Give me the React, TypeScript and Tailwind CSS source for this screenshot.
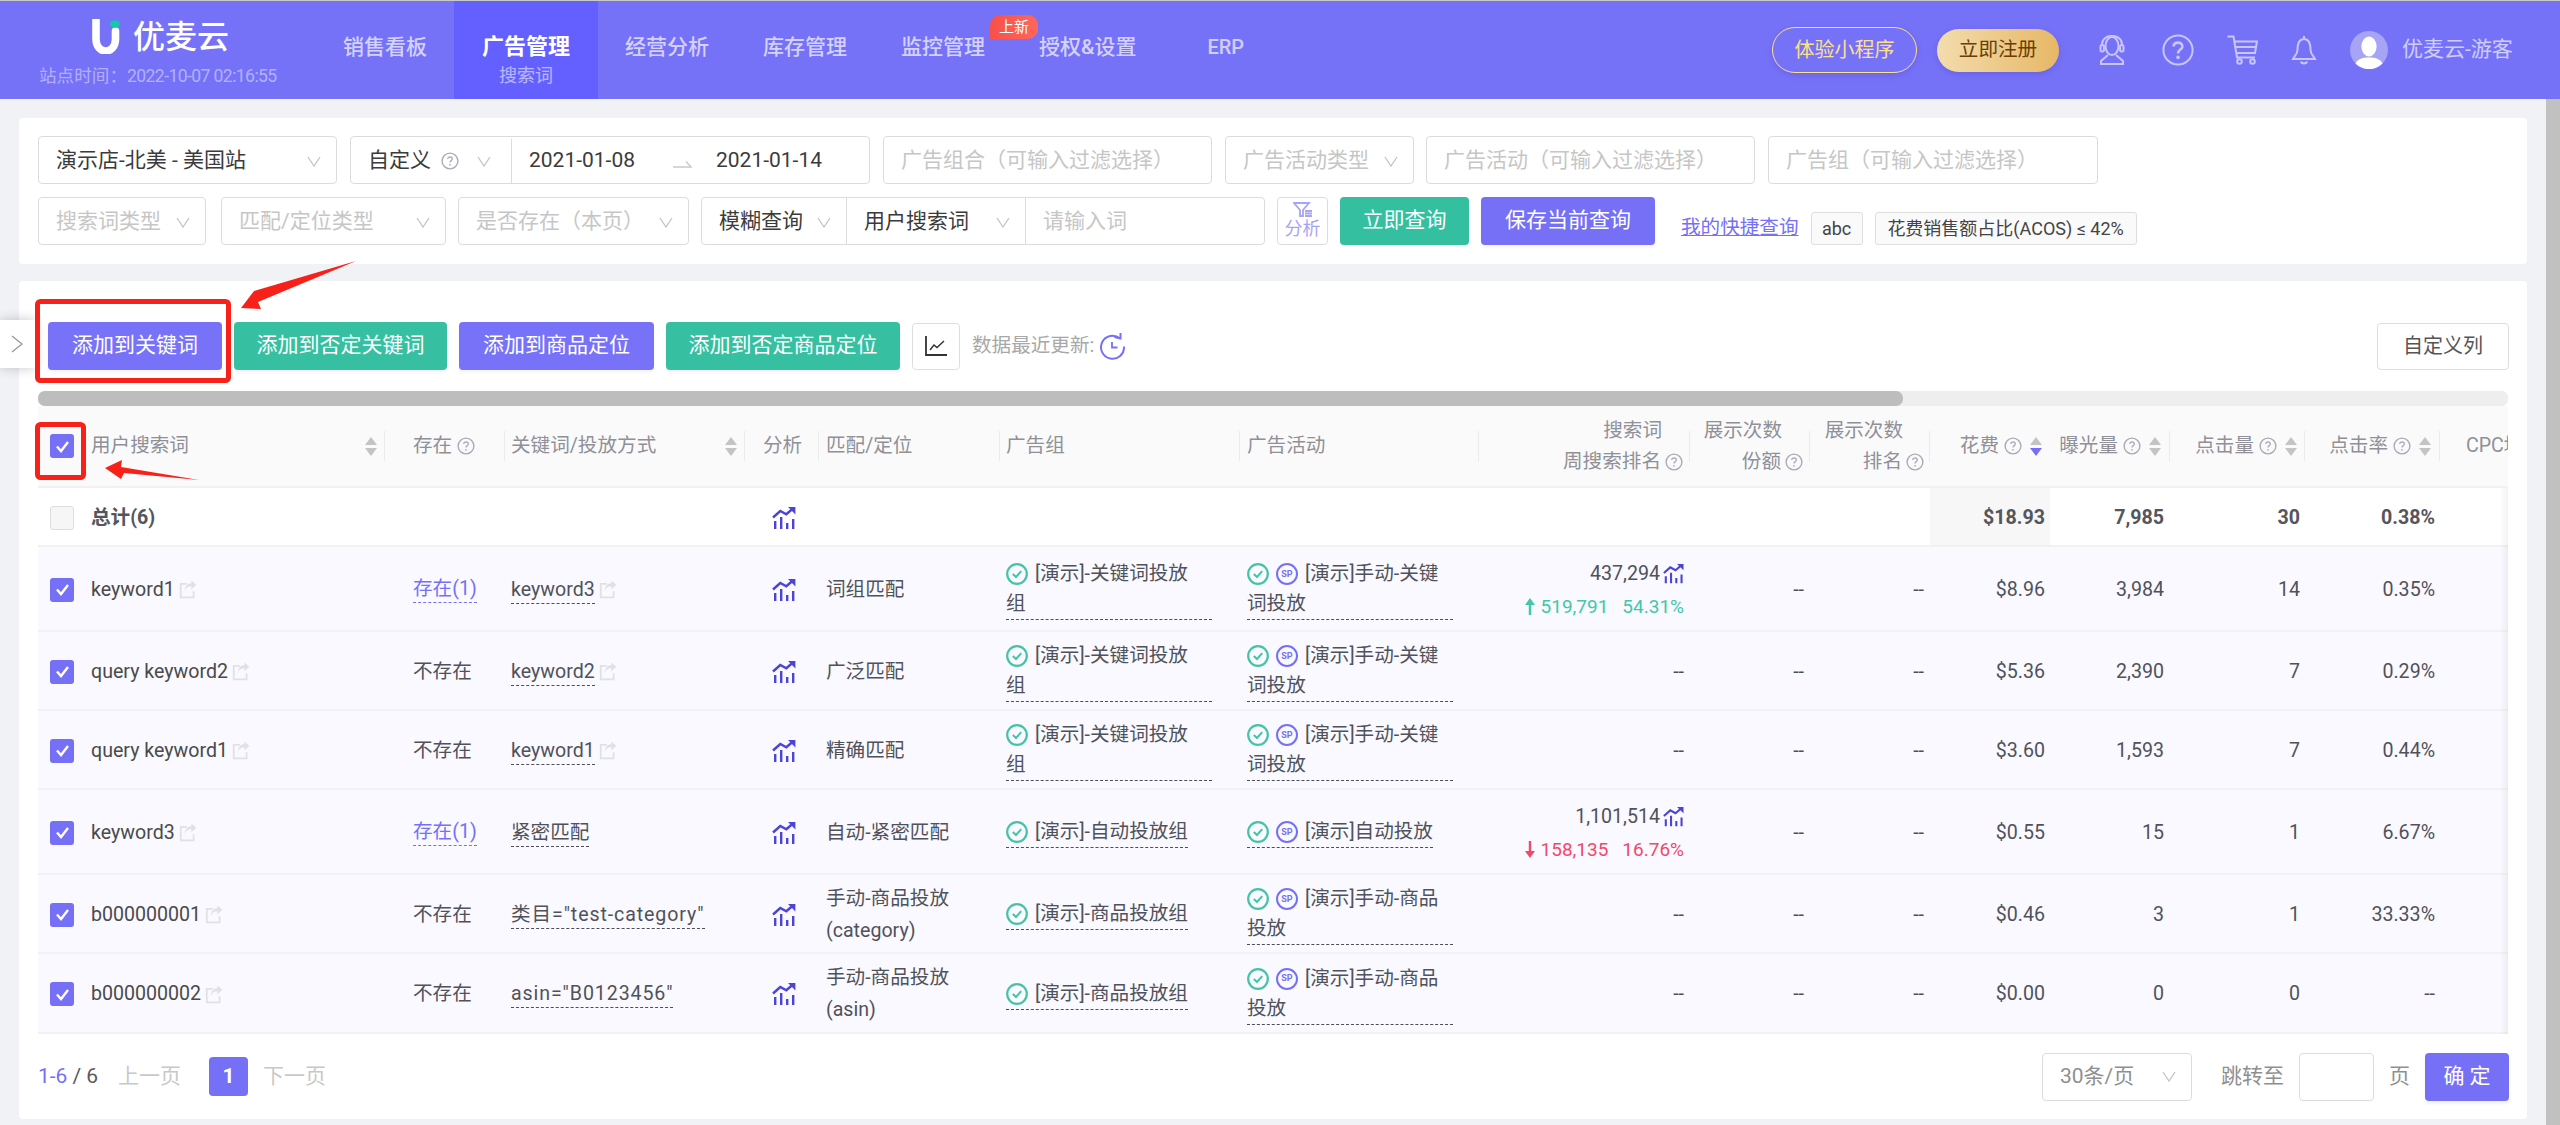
const gridCols =
  'grid grid-cols-[347px_120px_240px_74px_181px_240px_239px_211px_120px_120px_120px_120px_135px_135px_68px]';

function Chevron({ className = '' }: { className?: string }) {
  return (
    <svg width="14" height="11" viewBox="0 0 14 11" fill="none" className={`shrink-0 ${className}`}>
      <path d="M1 1L7 10L13 1" stroke="#c4c4c4" strokeWidth="1.3" />
    </svg>
  );
}

function Help({ size = 18 }: { size?: number }) {
  return (
    <svg width={size} height={size} viewBox="0 0 18 18" fill="none" className="shrink-0">
      <circle cx="9" cy="9" r="7.9" stroke="#a9abb6" strokeWidth="1.4" />
      <path d="M6.6 7C6.8 5.6 7.8 5 9 5C10.4 5 11.3 5.9 11.3 7C11.3 8.6 9 8.7 9 10.6" stroke="#a9abb6" strokeWidth="1.3" />
      <circle cx="9" cy="12.8" r="0.9" fill="#a9abb6" />
    </svg>
  );
}

function Sort({ active = false, className = '' }: { active?: boolean; className?: string }) {
  return (
    <span className={`flex shrink-0 flex-col gap-[3px] ${className}`}>
      <span className="h-0 w-0 border-x-[6px] border-b-[8px] border-x-transparent border-b-[#c4c4c4]" />
      <span
        className={`h-0 w-0 border-x-[6px] border-t-[8px] border-x-transparent ${
          active ? 'border-t-[#7670f7]' : 'border-t-[#c4c4c4]'
        }`}
      />
    </span>
  );
}

function TrendIcon({ size = 24 }: { size?: number }) {
  return (
    <svg width={size} height={size} viewBox="0 0 24 24" fill="none" className="shrink-0">
      <path d="M1 11.5L8.3 5L14.3 8.2L21 2.5" stroke="#4c44d6" strokeWidth="2.4" />
      <path d="M16 1H23.4V8.4Z" fill="#4c44d6" />
      <path d="M2 15h2.4v8H2zM8 11h2.4v12H8zM14 17h2.4v6H14zM20 13h2.4v10H20z" fill="#4c44d6" />
    </svg>
  );
}

function ShareIcon() {
  return (
    <svg width="18" height="19" viewBox="0 0 16 17" fill="none" className="ml-[4px] shrink-0">
      <path d="M7 3.5H1.5V15.5H13V10" stroke="#e0e1e5" strokeWidth="1.6" />
      <path d="M5 11C5.5 7 8 5.5 11 5.5V8.5L15.5 4.2L11 0.5V3C7.5 3 5 6 5 11Z" fill="#e0e1e5" />
    </svg>
  );
}

function CheckCircle() {
  return (
    <svg width="22" height="22" viewBox="0 0 22 22" fill="none" className="shrink-0">
      <circle cx="11" cy="11" r="9.8" stroke="#44c3a6" strokeWidth="2.2" />
      <path d="M6.8 11L10 14L15.2 8.2" stroke="#44c3a6" strokeWidth="2" />
    </svg>
  );
}

function SpBadge() {
  return (
    <span className="flex h-[22px] w-[22px] shrink-0 items-center justify-center rounded-full border-2 border-[#7670f7] text-[9px] leading-none font-bold text-[#7670f7]">
      SP
    </span>
  );
}

function Checkbox({ checked = true }: { checked?: boolean }) {
  if (!checked) {
    return <span className="h-[24px] w-[24px] shrink-0 rounded-[3px] border border-[#dedede] bg-[#f6f6f6]" />;
  }
  return (
    <span className="flex h-[24px] w-[24px] shrink-0 items-center justify-center rounded-[3px] bg-[#7670f7]">
      <svg width="15" height="13" viewBox="0 0 15 13" fill="none">
        <path d="M2 6.5L6 11L13 2" stroke="#fff" strokeWidth="2.4" />
      </svg>
    </span>
  );
}

function Field({
  width,
  children,
  chevron = false,
}: {
  width: string;
  children: React.ReactNode;
  chevron?: boolean;
}) {
  return (
    <div
      className={`flex h-[48px] shrink-0 items-center justify-between rounded-[4px] border border-[#dcdcdc] pt-[2px] pr-[15px] pl-[17px] whitespace-nowrap ${width}`}
    >
      <span>{children}</span>
      {chevron && <Chevron />}
    </div>
  );
}

const placeholder = 'text-[#c6c6c6]';

function Header() {
  const navItems = [
    { label: '销售看板' },
    { label: '广告管理', sub: '搜索词' },
    { label: '经营分析' },
    { label: '库存管理' },
    { label: '监控管理', badge: '上新' },
    { label: '授权&设置' },
  ];

  return (
    <header className="flex h-[99px] shrink-0 border-t border-[#c9c9c9] bg-[#7672f8] text-white">
      <div className="w-[316px] shrink-0 pt-[18px] pl-[39px]">
        <div className="ml-[53px] flex h-[35px] items-center gap-[13px]">
          <svg width="28" height="35" viewBox="0 0 28 35" fill="none">
            <path d="M4 1V20C4 36 23.5 36 23.5 20V12" stroke="#fff" strokeWidth="7.6" strokeLinecap="round" />
            <ellipse cx="23" cy="5" rx="5" ry="3.8" fill="#12c9a8" />
          </svg>
          <span className="text-[32px] leading-none font-medium">优麦云</span>
        </div>
        <p className="mt-[9px] text-[17.6px] leading-[26px] whitespace-nowrap text-white/45">
          站点时间：<span className="tracking-[-0.6px]">2022-10-07 02:16:55</span>
        </p>
      </div>

      <nav className="flex">
        {navItems.map((item) => (
          <div
            key={item.label}
            className={`relative pt-[31px] text-center whitespace-nowrap ${
              item.sub ? 'bg-[#6460ff] px-[28px]' : 'px-[27px]'
            }`}
          >
            <div className={`leading-[30px] ${item.sub ? 'text-[22px] font-bold text-white' : 'text-[21px] font-medium text-white/70'}`}>
              {item.label}
            </div>
            {item.sub && <div className="mt-[3px] text-[18px] leading-[22px] text-white/55">{item.sub}</div>}
            {item.badge && (
              <span className="absolute top-[14px] left-[116px] z-10 flex h-[24px] w-[48px] items-center justify-center rounded-t-[10px] rounded-br-[10px] bg-gradient-to-r from-[#f8504a] to-[#ff665c] text-[15px] leading-none text-white">
                {item.badge}
              </span>
            )}
          </div>
        ))}
        <div className="ml-[44px] pt-[31px] text-[20px] leading-[30px] font-medium text-white/65">ERP</div>
      </nav>

      <div className="ml-auto flex items-center pr-[43px]">
        <button className="flex h-[46px] w-[145px] items-center justify-center rounded-[23px] border border-[#ffe08a] text-[20px] text-[#ffe08a] shadow-[0_2px_6px_rgba(60,50,180,0.25)]">
          体验小程序
        </button>
        <button className="ml-[20px] flex h-[43px] w-[122px] items-center justify-center rounded-[22px] bg-gradient-to-r from-[#f3dcad] to-[#e6b865] text-[19.6px] text-[#6b3d05] shadow-[0_2px_6px_rgba(60,50,180,0.25)]">
          立即注册
        </button>
        <svg width="26" height="30" viewBox="0 0 26 30" fill="none" className="ml-[40px]" stroke="#c8c6fc" strokeWidth="2">
          <ellipse cx="13" cy="11" rx="6.5" ry="9" />
          <path d="M3 11V9.5C3 -2 23 -2 23 9.5V11" />
          <rect x="1.5" y="10" width="3.4" height="6.5" rx="1.5" />
          <rect x="21.1" y="10" width="3.4" height="6.5" rx="1.5" />
          <path d="M9 20L2 26V29H24V26L17 20" />
        </svg>
        <svg width="32" height="32" viewBox="0 0 32 32" fill="none" className="ml-[37px]">
          <circle cx="16" cy="16" r="14.6" stroke="#c8c6fc" strokeWidth="2" />
          <path d="M11.5 12.5C11.8 9.8 13.7 8.6 16 8.6C18.6 8.6 20.4 10.3 20.4 12.4C20.4 15.6 16 15.6 16 19.4" stroke="#c8c6fc" strokeWidth="2.6" />
          <circle cx="16" cy="23.4" r="1.8" fill="#c8c6fc" />
        </svg>
        <svg width="31" height="30" viewBox="0 0 31 30" fill="none" className="ml-[33px]" stroke="#c8c6fc" strokeWidth="2">
          <path d="M0.5 1.5H6.5L10 22.5H28" />
          <path d="M7.5 6.5H30L28 18H9.5M8.5 12H29" />
          <circle cx="12.5" cy="26.5" r="2.3" />
          <circle cx="25.5" cy="26.5" r="2.3" />
        </svg>
        <svg width="26" height="30" viewBox="0 0 26 30" fill="none" className="ml-[33px]" stroke="#c8c6fc" strokeWidth="2">
          <path d="M13 1V4M13 4C8 4 6.5 9 6.5 15C6.5 19 3.5 21 2 24H24C22.5 21 19.5 19 19.5 15C19.5 9 18 4 13 4Z" />
          <path d="M10 26.5C10.5 29 15.5 29 16 26.5" />
        </svg>
        <svg width="38" height="38" viewBox="0 0 38 38" className="ml-[33px]">
          <circle cx="19" cy="19" r="19" fill="#a7a4f5" />
          <ellipse cx="19" cy="15.5" rx="7.6" ry="10" fill="#fff" />
          <path d="M5.5 32.5C8 27.5 13 26.5 19 26.5C25 26.5 30 27.5 32.5 32.5C25 40 13 40 5.5 32.5Z" fill="#fff" />
        </svg>
        <span className="ml-[14px] w-[115px] text-[21px] whitespace-nowrap text-white/65">优麦云-游客</span>
      </div>
    </header>
  );
}

function FilterCard() {
  return (
    <section className="rounded-[4px] bg-white pt-[18px] pb-[19px] pl-[19px] text-[21px] text-[#3b3b3b]">
      <div className="flex gap-[13px]">
        <Field width="w-[299px]" chevron>
          演示店-北美 - 美国站
        </Field>
        <div className="flex h-[48px] w-[520px] shrink-0 rounded-[4px] border border-[#dcdcdc] pt-[2px]">
          <div className="flex w-[161px] items-center gap-[10px] border-r border-[#dcdcdc] pl-[17px]">
            <span>自定义</span>
            <Help />
            <Chevron className="ml-[8px]" />
          </div>
          <div className="flex items-center pl-[17px]">
            <span className="w-[110px]">2021-01-08</span>
            <svg width="19" height="8" viewBox="0 0 19 8" fill="none" className="mt-[6px] mr-[24px] ml-[34px]">
              <path d="M0 7H18L13 1.5" stroke="#c9c9c9" strokeWidth="1.4" />
            </svg>
            <span>2021-01-14</span>
          </div>
        </div>
        <Field width={`w-[329px] ${placeholder}`}>广告组合（可输入过滤选择）</Field>
        <Field width={`w-[189px] ${placeholder}`} chevron>
          广告活动类型
        </Field>
        <Field width={`w-[329px] ${placeholder} -ml-px`}>广告活动（可输入过滤选择）</Field>
        <Field width={`w-[330px] ${placeholder}`}>广告组（可输入过滤选择）</Field>
      </div>

      <div className="mt-[13px] flex items-center">
        <Field width={`w-[168px] ${placeholder}`} chevron>
          搜索词类型
        </Field>
        <Field width={`ml-[15px] w-[225px] ${placeholder}`} chevron>
          匹配/定位类型
        </Field>
        <Field width={`ml-[12px] w-[231px] ${placeholder}`} chevron>
          是否存在（本页）
        </Field>
        <div className="ml-[12px] flex h-[48px] w-[564px] shrink-0 rounded-[4px] border border-[#dcdcdc]">
          <div className="flex w-[145px] items-center justify-between border-r border-[#dcdcdc] pt-[2px] pr-[15px] pl-[17px]">
            模糊查询
            <Chevron />
          </div>
          <div className="flex w-[179px] items-center justify-between border-r border-[#dcdcdc] pt-[2px] pr-[15px] pl-[17px]">
            用户搜索词
            <Chevron />
          </div>
          <div className={`flex items-center pt-[2px] pl-[17px] ${placeholder}`}>请输入词</div>
        </div>
        <button className="ml-[12px] flex h-[48px] w-[51px] shrink-0 flex-col items-center justify-center rounded-[4px] border border-[#dcdcdc]">
          <svg width="20" height="15" viewBox="0 0 20 15" fill="none" stroke="#a7a3f5" strokeWidth="1.8">
            <path d="M1 1H16L10 8V14L7 14V8Z" />
            <path d="M12 9H19M12 11.5H19M12 14H19" />
          </svg>
          <span className="text-[18px] leading-[23px] text-[#a7a3f5]">分析</span>
        </button>
        <button className="ml-[12px] h-[48px] w-[129px] shrink-0 rounded-[4px] bg-[#34c0a0] text-white">立即查询</button>
        <button className="ml-[12px] h-[48px] w-[174px] shrink-0 rounded-[4px] bg-[#7670f7] text-white shadow-[0_3px_3px_rgba(0,0,0,0.04)]">
          保存当前查询
        </button>
        <a className="mt-[14px] ml-[26px] text-[19.6px] whitespace-nowrap text-[#7670f7] underline">我的快捷查询</a>
        <span className="mt-[14px] ml-[12px] flex h-[33px] w-[52px] items-center justify-center rounded-[3px] border border-[#dedede] bg-[#fafafa] text-[18px] text-[#444]">
          abc
        </span>
        <span className="mt-[14px] ml-[12px] flex h-[33px] w-[262px] items-center justify-center rounded-[3px] border border-[#dedede] bg-[#fafafa] text-[18px] whitespace-nowrap text-[#444]">
          花费销售额占比(ACOS) ≤ 42%
        </span>
      </div>
    </section>
  );
}

type Row = {
  query: string;
  exists: boolean;
  keyword: string;
  keywordIcon?: boolean;
  match: string[];
  group: string[];
  campaign: string[];
  rank?: { value: string; up: boolean; delta: string; pct: string };
  spend: string;
  impressions: string;
  clicks: string;
  ctr: string;
  height: string;
};

const rows: Row[] = [
  {
    query: 'keyword1',
    exists: true,
    keyword: 'keyword3',
    keywordIcon: true,
    match: ['词组匹配'],
    group: ['[演示]-关键词投放', '组'],
    campaign: ['[演示]手动-关键', '词投放'],
    rank: { value: '437,294', up: true, delta: '519,791', pct: '54.31%' },
    spend: '$8.96',
    impressions: '3,984',
    clicks: '14',
    ctr: '0.35%',
    height: 'h-[85px]',
  },
  {
    query: 'query keyword2',
    exists: false,
    keyword: 'keyword2',
    keywordIcon: true,
    match: ['广泛匹配'],
    group: ['[演示]-关键词投放', '组'],
    campaign: ['[演示]手动-关键', '词投放'],
    spend: '$5.36',
    impressions: '2,390',
    clicks: '7',
    ctr: '0.29%',
    height: 'h-[79px]',
  },
  {
    query: 'query keyword1',
    exists: false,
    keyword: 'keyword1',
    keywordIcon: true,
    match: ['精确匹配'],
    group: ['[演示]-关键词投放', '组'],
    campaign: ['[演示]手动-关键', '词投放'],
    spend: '$3.60',
    impressions: '1,593',
    clicks: '7',
    ctr: '0.44%',
    height: 'h-[79px]',
  },
  {
    query: 'keyword3',
    exists: true,
    keyword: '紧密匹配',
    match: ['自动-紧密匹配'],
    group: ['[演示]-自动投放组'],
    campaign: ['[演示]自动投放'],
    rank: { value: '1,101,514', up: false, delta: '158,135', pct: '16.76%' },
    spend: '$0.55',
    impressions: '15',
    clicks: '1',
    ctr: '6.67%',
    height: 'h-[85px]',
  },
  {
    query: 'b000000001',
    exists: false,
    keyword: '类目="test-category"',
    match: ['手动-商品投放', '(category)'],
    group: ['[演示]-商品投放组'],
    campaign: ['[演示]手动-商品', '投放'],
    spend: '$0.46',
    impressions: '3',
    clicks: '1',
    ctr: '33.33%',
    height: 'h-[79px]',
  },
  {
    query: 'b000000002',
    exists: false,
    keyword: 'asin="B0123456"',
    match: ['手动-商品投放', '(asin)'],
    group: ['[演示]-商品投放组'],
    campaign: ['[演示]手动-商品', '投放'],
    spend: '$0.00',
    impressions: '0',
    clicks: '0',
    ctr: '--',
    height: 'h-[80px]',
  },
];

function HeadCell({
  className = '',
  children,
  divider = true,
}: {
  className?: string;
  children: React.ReactNode;
  divider?: boolean;
}) {
  return (
    <div className={`flex h-[30px] items-center whitespace-nowrap ${divider ? 'border-r border-[#ebebeb]' : ''} ${className}`}>
      {children}
    </div>
  );
}

function Dash() {
  return <span className="flex items-center justify-end pr-[6px] text-[#4d4f57]">--</span>;
}

function DottedLabel({ lines, badges }: { lines: string[]; badges: React.ReactNode }) {
  return (
    <div className={`border-b border-dashed border-[#4d4f57] leading-[30px] ${lines.length > 1 ? 'w-[206px]' : 'w-fit'}`}>
      <div className="flex items-center whitespace-nowrap">
        {badges}
        <span className="ml-[7px]">{lines[0]}</span>
      </div>
      {lines[1] && <div>{lines[1]}</div>}
    </div>
  );
}

function RankArrow({ up }: { up: boolean }) {
  return (
    <svg width="10" height="17" viewBox="0 0 10 17" className={`mr-[6px] shrink-0 ${up ? '' : 'rotate-180'}`} fill="currentColor">
      <path d="M5 0L10 7H6.2V17H3.8V7H0Z" />
    </svg>
  );
}

function ResultsTable() {
  return (
    <div className="relative mt-[21px] w-[2470px] overflow-hidden text-[19.6px]">
      <div className="h-[15px] rounded-[6px] bg-[#eeeeee]">
        <div className="h-full w-[1865px] rounded-[7px] bg-[#bdbdbd]" />
      </div>

      <div className={`${gridCols} h-[82px] items-center border-b-2 border-[#f1f1f1] bg-[#fafafa] text-[#8f9098]`}>
        <HeadCell className="pr-[7px] pl-[12px]">
          <Checkbox />
          <span className="ml-[17px]">用户搜索词</span>
          <span className="ml-auto">
            <Sort />
          </span>
        </HeadCell>
        <HeadCell className="gap-[5px] pl-[28px]">
          存在
          <Help />
        </HeadCell>
        <HeadCell className="pr-[7px] pl-[6px]">
          关键词/投放方式
          <span className="ml-auto">
            <Sort />
          </span>
        </HeadCell>
        <HeadCell className="pl-[18px]">分析</HeadCell>
        <HeadCell className="pl-[7px]">匹配/定位</HeadCell>
        <HeadCell className="pl-[6px]">广告组</HeadCell>
        <HeadCell className="pl-[7px]">广告活动</HeadCell>
        <HeadCell className="justify-end pr-[6px]">
          <div className="text-right leading-[31px]">
            <div className="pr-[21px]">搜索词</div>
            <div className="flex items-center gap-[4px]">
              周搜索排名
              <Help />
            </div>
          </div>
        </HeadCell>
        <HeadCell className="justify-end pr-[6px]">
          <div className="text-right leading-[31px]">
            <div className="pr-[21px]">展示次数</div>
            <div className="flex items-center justify-end gap-[4px]">
              份额
              <Help />
            </div>
          </div>
        </HeadCell>
        <HeadCell className="justify-end pr-[5px]">
          <div className="text-right leading-[31px]">
            <div className="pr-[21px]">展示次数</div>
            <div className="flex items-center justify-end gap-[4px]">
              排名
              <Help />
            </div>
          </div>
        </HeadCell>
        <HeadCell className="justify-end gap-[5px] pr-[8px]" divider={false}>
          花费
          <Help />
          <Sort active className="ml-[3px]" />
        </HeadCell>
        <HeadCell className="justify-end gap-[5px] pr-[8px]">
          曝光量
          <Help />
          <Sort className="ml-[3px]" />
        </HeadCell>
        <HeadCell className="justify-end gap-[5px] pr-[7px]">
          点击量
          <Help />
          <Sort className="ml-[3px]" />
        </HeadCell>
        <HeadCell className="justify-end gap-[5px] pr-[8px]">
          点击率
          <Help />
          <Sort className="ml-[3px]" />
        </HeadCell>
        <HeadCell className="overflow-hidden pl-[26px]" divider={false}>
          CPC均价
        </HeadCell>
      </div>

      <div className={`${gridCols} h-[59px] border-b-2 border-[#f1f1f1] bg-white pt-[2px] font-bold text-[#54565e]`}>
        <div className="flex items-center pl-[12px]">
          <Checkbox checked={false} />
          <span className="ml-[17px]">总计(6)</span>
        </div>
        <div />
        <div />
        <div className="flex items-center pl-[27px]">
          <TrendIcon />
        </div>
        <div />
        <div />
        <div />
        <div />
        <div />
        <div />
        <div className="-mt-[2px] flex items-center justify-end bg-[#f7f7f7] pt-[2px] pr-[5px]">$18.93</div>
        <div className="flex items-center justify-end pr-[6px]">7,985</div>
        <div className="flex items-center justify-end pr-[5px]">30</div>
        <div className="flex items-center justify-end pr-[5px]">0.38%</div>
        <div />
      </div>

      {rows.map((row) => (
        <div key={row.query} className={`${gridCols} ${row.height} border-b-2 border-[#f2f2f6] bg-[#f9f9ff] pt-[2px] text-[#50525b]`}>
          <div className="flex items-center pl-[12px]">
            <Checkbox />
            <span className="ml-[17px] whitespace-nowrap text-[#4a4a4a]">{row.query}</span>
            <ShareIcon />
          </div>
          <div className="flex items-center pl-[28px]">
            {row.exists ? (
              <span className="border-b border-dashed border-[#7670f7] leading-[26px] text-[#7670f7]">存在(1)</span>
            ) : (
              '不存在'
            )}
          </div>
          <div className="flex items-center pl-[6px]">
            <span
              className={`border-b border-dashed border-[#4d4f57] leading-[27px] whitespace-nowrap ${
                row.keyword.includes('=') ? 'tracking-[0.9px]' : ''
              }`}
            >
              {row.keyword}
            </span>
            {row.keywordIcon && <ShareIcon />}
          </div>
          <div className="flex items-center pl-[27px]">
            <TrendIcon />
          </div>
          <div className="flex flex-col justify-center pl-[7px] leading-[32px] whitespace-nowrap">
            {row.match.map((line) => (
              <div key={line}>{line}</div>
            ))}
          </div>
          <div className="flex items-center pl-[6px]">
            <DottedLabel lines={row.group} badges={<CheckCircle />} />
          </div>
          <div className="flex items-center pl-[7px]">
            <DottedLabel
              lines={row.campaign}
              badges={
                <span className="flex gap-[7px]">
                  <CheckCircle />
                  <SpBadge />
                </span>
              }
            />
          </div>
          {row.rank ? (
            <div className="flex flex-col items-end justify-center pr-[6px] leading-[33px] whitespace-nowrap">
              <div className="flex items-center gap-[3px]">
                {row.rank.value}
                <TrendIcon size={21} />
              </div>
              <div className={`flex items-center text-[19px] ${row.rank.up ? 'text-[#41c8a8]' : 'text-[#f0496a]'}`}>
                <RankArrow up={row.rank.up} />
                <span className="mr-[14px]">{row.rank.delta}</span>
                <span>{row.rank.pct}</span>
              </div>
            </div>
          ) : (
            <Dash />
          )}
          <Dash />
          <Dash />
          <div className="flex items-center justify-end pr-[5px]">{row.spend}</div>
          <div className="flex items-center justify-end pr-[6px]">{row.impressions}</div>
          <div className="flex items-center justify-end pr-[5px]">{row.clicks}</div>
          <div className="flex items-center justify-end pr-[5px]">{row.ctr}</div>
          <div />
        </div>
      ))}
      <div className="pointer-events-none absolute top-[97px] right-0 bottom-0 w-[8px] bg-gradient-to-r from-transparent to-black/5" />
    </div>
  );
}

function Pagination() {
  return (
    <div className="flex h-[85px] w-[2471px] items-center text-[21px]">
      <span className="w-[80px] shrink-0">
        <span className="text-[#7670f7]">1-6</span>
        <span className="ml-[5px] text-[#5a5a5a]">/ 6</span>
      </span>
      <span className="text-[#c8c8c8]">上一页</span>
      <span className="ml-[28px] flex h-[39px] w-[39px] items-center justify-center rounded-[4px] bg-[#7670f7] font-bold text-white">
        1
      </span>
      <span className="ml-[15px] text-[#c8c8c8]">下一页</span>

      <div className="ml-auto flex items-center text-[#8f8f8f]">
        <div className="flex h-[48px] w-[150px] items-center justify-between rounded-[4px] border border-[#dcdcdc] pr-[15px] pl-[17px]">
          30条/页
          <Chevron />
        </div>
        <span className="ml-[29px]">跳转至</span>
        <div className="ml-[15px] h-[48px] w-[75px] rounded-[4px] border border-[#dcdcdc]" />
        <span className="ml-[15px]">页</span>
        <button className="ml-[15px] h-[48px] w-[84px] rounded-[4px] bg-[#7670f7] text-[21px] whitespace-nowrap text-white shadow-[0_3px_3px_rgba(0,0,0,0.05)]">
          确 定
        </button>
      </div>
    </div>
  );
}

function ActionButton({ label, teal = false, width }: { label: string; teal?: boolean; width: string }) {
  return (
    <button
      className={`h-[48px] shrink-0 rounded-[4px] text-[21px] whitespace-nowrap text-white shadow-[0_3px_3px_rgba(0,0,0,0.04)] ${width} ${
        teal ? 'bg-[#36c0a1]' : 'bg-[#7872f8]'
      }`}
    >
      {label}
    </button>
  );
}

export default function App() {
  return (
    <div className="relative flex h-[1125px] w-[2560px] flex-col overflow-hidden bg-[#f0f2f6] font-['Roboto','Noto_Sans_CJK_SC',sans-serif]">
      <Header />

      <div className="flex min-h-0 flex-1">
        <main className="flex flex-1 flex-col gap-[17px] px-[19px] pt-[19px]">
          <FilterCard />

          <section className="h-[838px] rounded-[4px] bg-white pt-[41px] pl-[19px]">
            <div className="flex items-center gap-[12px] pl-[10px]">
              <ActionButton label="添加到关键词" width="w-[174px]" />
              <ActionButton label="添加到否定关键词" width="w-[213px]" teal />
              <ActionButton label="添加到商品定位" width="w-[195px]" />
              <ActionButton label="添加到否定商品定位" width="w-[234px]" teal />
              <button className="flex h-[47px] w-[48px] shrink-0 items-center justify-center rounded-[4px] border border-[#dedede]">
                <svg width="22" height="20" viewBox="0 0 22 20" fill="none" stroke="#333" strokeWidth="1.8">
                  <path d="M1 0V19H22" />
                  <path d="M5 14L9 9L12 11.5L19 5" strokeWidth="1.4" />
                </svg>
              </button>
              <span className="text-[19.6px] whitespace-nowrap text-[#a8a8a8]">数据最近更新:</span>
              <svg width="27" height="27" viewBox="0 0 27 27" fill="none" stroke="#7670f7" strokeWidth="2" className="ml-[-7px]">
                <path d="M21 5.5A11.5 11.5 0 1 0 25 13.5" />
                <path d="M15.5 4L21.5 5.5L21.5 0" />
                <path d="M13 9V14.5H18.5" strokeWidth="1.8" />
              </svg>
              <button className="ml-auto mr-[18px] h-[47px] w-[132px] shrink-0 rounded-[4px] border border-[#dedede] text-[20px] text-[#555]">
                自定义列
              </button>
            </div>

            <ResultsTable />
            <Pagination />
          </section>
        </main>
        <div className="w-[14px] shrink-0 bg-[#c1c1c1]" />
      </div>

      {/* side tab */}
      <div className="absolute top-[320px] left-0 flex h-[48px] w-[35px] items-center rounded-r-[2px] bg-white pl-[11px] shadow-[0_0_12px_rgba(0,0,0,0.22)]">
        <svg width="12" height="18" viewBox="0 0 12 18" fill="none">
          <path d="M1 1L11 9L1 17" stroke="#999" strokeWidth="1.4" />
        </svg>
      </div>

      {/* red annotations */}
      <svg className="pointer-events-none absolute inset-0" width="2560" height="1125" viewBox="0 0 2560 1125" fill="none">
        <rect x="37.5" y="301.5" width="191" height="79" rx="3" stroke="#f7211a" strokeWidth="5" />
        <rect x="37.5" y="424.5" width="46" height="53" rx="3" stroke="#f7211a" strokeWidth="5" />
        <path d="M356 261L254 291L241 308L261 309L258 302Z" fill="#f7211a" />
        <path d="M105 468L122 460L121 467L199 480L124 473L121 479Z" fill="#f7211a" />
      </svg>
    </div>
  );
}
